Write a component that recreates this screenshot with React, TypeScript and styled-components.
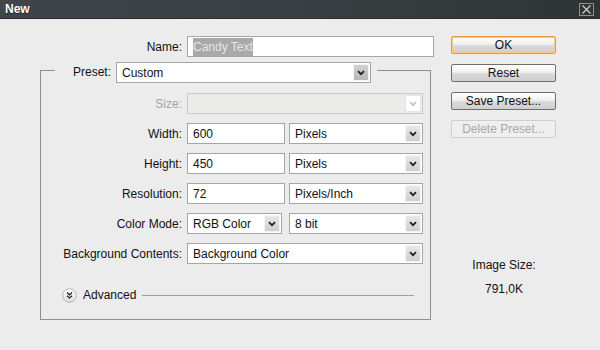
import React from 'react';
import styled, { createGlobalStyle } from 'styled-components';

const GlobalStyle = createGlobalStyle`
  html, body {
    margin: 0;
    padding: 0;
    background: #ececec;
  }
  body {
    font-family: 'Liberation Sans', Arial, sans-serif;
    font-size: 12px;
    color: #111;
  }
`;

const Window = styled.div`
  width: 600px;
  height: 350px;
  background: #ececec;
  overflow: hidden;
`;

const TitleBar = styled.div`
  height: 19px;
  display: flex;
  align-items: center;
  justify-content: space-between;
  padding: 0 6px 0 5px;
  box-sizing: border-box;
  background: linear-gradient(90deg, #3f454b 0%, #393f42 50%, #2f3433 100%);
  border-bottom: 1px solid #2a2d2d;
`;

const Title = styled.span`
  color: #fff;
  font-weight: bold;
  font-size: 12px;
  text-shadow: 0 1px 1px rgba(0, 0, 0, 0.6);
`;

const CloseBox = styled.div`
  width: 15px;
  height: 13px;
  box-sizing: border-box;
  border: 1px solid #8c9090;
  display: flex;
  align-items: center;
  justify-content: center;
`;

const Content = styled.div`
  display: flex;
  padding-top: 17px;
`;

const LeftColumn = styled.div`
  width: 440px;
  display: flex;
  flex-direction: column;
`;

const FormRow = styled.div<{ $labelWidth: number }>`
  display: grid;
  grid-template-columns: ${p => p.$labelWidth}px 1fr;
  column-gap: 5px;
  align-items: center;
  height: 21px;
`;

const Label = styled.label<{ $disabled?: boolean }>`
  text-align: right;
  color: ${p => (p.$disabled ? '#a4a4a4' : '#111')};
  white-space: nowrap;
`;

const Controls = styled.div<{ $gap?: number }>`
  display: flex;
  gap: ${p => p.$gap ?? 4}px;
  height: 21px;
`;

const TextInput = styled.div<{ $width?: number }>`
  box-sizing: border-box;
  height: 21px;
  width: ${p => (p.$width ? `${p.$width}px` : 'auto')};
  flex: ${p => (p.$width ? 'none' : '1')};
  background: #fff;
  border: 1px solid #a3a6a8;
  display: flex;
  align-items: center;
  padding-left: 5px;
  color: #111;
`;

const Selected = styled.span`
  background: #a9a9a9;
  color: #e6e6e6;
  padding: 1px 0;
  line-height: 16px;
`;

const SelectBox = styled.div<{ $disabled?: boolean; $width?: number }>`
  box-sizing: border-box;
  height: 21px;
  width: ${p => (p.$width ? `${p.$width}px` : 'auto')};
  flex: ${p => (p.$width ? 'none' : '1')};
  background: ${p => (p.$disabled ? '#ebebea' : '#fff')};
  border: 1px solid ${p => (p.$disabled ? '#cacac2' : '#a3a6a8')};
  display: flex;
  align-items: center;
  padding: 1px;
`;

const SelectValue = styled.span`
  flex: 1;
  padding-left: 4px;
  white-space: nowrap;
  overflow: hidden;
`;

const ArrowButton = styled.div<{ $disabled?: boolean; $dark?: boolean }>`
  width: 16px;
  height: 17px;
  box-sizing: border-box;
  border: 1px solid ${p => (p.$disabled ? '#e4e4e4' : '#f4f4f4')};
  background: ${p =>
    p.$disabled
      ? '#fff'
      : p.$dark
      ? 'linear-gradient(#d2d2d2, #b8b8b8)'
      : 'linear-gradient(#e8e8e8, #cfcfcf)'};
  display: flex;
  align-items: center;
  justify-content: center;
`;

const Chevron = ({ color }: { color: string }) => (
  <svg width="8" height="6" viewBox="0 0 8 6">
    <path d="M1 1.2 L4 4.2 L7 1.2" fill="none" stroke={color} strokeWidth="1.8" />
  </svg>
);

const Select = ({
  value,
  width,
  disabled,
  dark,
}: {
  value?: string;
  width?: number;
  disabled?: boolean;
  dark?: boolean;
}) => (
  <SelectBox $disabled={disabled} $width={width}>
    <SelectValue>{value}</SelectValue>
    <ArrowButton $disabled={disabled} $dark={dark}>
      <Chevron color={disabled ? '#c4c4c4' : '#222'} />
    </ArrowButton>
  </SelectBox>
);

const Group = styled.div`
  margin: 5px 0 0 40px;
  width: 391px;
  display: flex;
  flex-direction: column;
`;

const GroupHeader = styled.div`
  display: flex;
  height: 21px;
`;

const Corner = styled.div<{ $side: 'left' | 'right' }>`
  margin-top: 8px;
  border-top: 1px solid #8e8e8e;
  border-${p => p.$side}: 1px solid #8e8e8e;
  width: ${p => (p.$side === 'left' ? '14px' : 'auto')};
  flex: ${p => (p.$side === 'left' ? 'none' : '1')};
  margin-left: ${p => (p.$side === 'right' ? '6px' : '0')};
`;

const PresetLabel = styled.label`
  width: 61px;
  box-sizing: border-box;
  padding-right: 5px;
  text-align: right;
  line-height: 21px;
`;

const GroupBody = styled.div`
  border: 1px solid #8e8e8e;
  border-top: none;
  padding: 10px 7px 17px 0;
  display: flex;
  flex-direction: column;
  gap: 9px;
`;

const AdvancedRow = styled.div`
  display: flex;
  align-items: center;
  gap: 6px;
  margin-top: 15px;
  padding-left: 21px;
  padding-right: 9px;
  height: 14px;
`;

const Rule = styled.div`
  flex: 1;
  border-top: 1px solid #a0a0a0;
  margin-top: 1px;
`;

const RightColumn = styled.div`
  margin-left: 11px;
  width: 105px;
  display: flex;
  flex-direction: column;
  gap: 10px;
`;

const Button = styled.div<{ $variant?: 'default' | 'disabled' }>`
  height: 18px;
  box-sizing: border-box;
  display: flex;
  align-items: center;
  justify-content: center;
  border-radius: 2px;
  border: 1px solid
    ${p =>
      p.$variant === 'default'
        ? '#e89a3c'
        : p.$variant === 'disabled'
        ? '#cdcdcd'
        : '#6f6f6f'};
  background: ${p =>
    p.$variant === 'disabled'
      ? '#efefef'
      : 'linear-gradient(#ffffff 0%, #f1f1f1 45%, #d9d9d9 55%, #cfcfcf 100%)'};
  box-shadow: ${p => (p.$variant === 'default' ? 'inset 0 0 0 1px #f6c98d' : 'none')};
  color: ${p => (p.$variant === 'disabled' ? '#a8a8a8' : '#111')};
`;

const ImageSize = styled.div`
  margin-top: 110px;
  display: flex;
  flex-direction: column;
  align-items: center;
  gap: 10px;
  padding-left: 1px;
`;

const AdvancedIcon = () => (
  <svg width="15" height="15" viewBox="0 0 15 15">
    <defs>
      <linearGradient id="adv" x1="0" y1="0" x2="0" y2="1">
        <stop offset="0" stopColor="#ffffff" />
        <stop offset="1" stopColor="#dcdcdc" />
      </linearGradient>
    </defs>
    <circle cx="7.5" cy="7.5" r="6.8" fill="url(#adv)" stroke="#b4b4b4" />
    <path d="M5 4.6 L7.5 6.8 L10 4.6 M5 7.8 L7.5 10 L10 7.8" fill="none" stroke="#222" strokeWidth="1.3" />
  </svg>
);

export default function App() {
  return (
    <Window>
      <GlobalStyle />
      <TitleBar>
        <Title>New</Title>
        <CloseBox>
          <svg width="11" height="9" viewBox="0 0 11 9">
            <path d="M1.5 0.5 L9.5 8.5 M9.5 0.5 L1.5 8.5" stroke="#cfd2d2" strokeWidth="1.2" />
          </svg>
        </CloseBox>
      </TitleBar>
      <Content>
        <LeftColumn>
          <FormRow $labelWidth={182}>
            <Label>Name:</Label>
            <TextInput $width={247}>
              <Selected>Candy Text</Selected>
            </TextInput>
          </FormRow>
          <Group>
            <GroupHeader>
              <Corner $side="left" />
              <PresetLabel>Preset:</PresetLabel>
              <Select value="Custom" width={255} dark />
              <Corner $side="right" />
            </GroupHeader>
            <GroupBody>
              <FormRow $labelWidth={141}>
                <Label $disabled>Size:</Label>
                <Controls>
                  <Select disabled />
                </Controls>
              </FormRow>
              <FormRow $labelWidth={141}>
                <Label>Width:</Label>
                <Controls>
                  <TextInput $width={98}>600</TextInput>
                  <Select value="Pixels" />
                </Controls>
              </FormRow>
              <FormRow $labelWidth={141}>
                <Label>Height:</Label>
                <Controls>
                  <TextInput $width={98}>450</TextInput>
                  <Select value="Pixels" />
                </Controls>
              </FormRow>
              <FormRow $labelWidth={141}>
                <Label>Resolution:</Label>
                <Controls>
                  <TextInput $width={98}>72</TextInput>
                  <Select value="Pixels/Inch" />
                </Controls>
              </FormRow>
              <FormRow $labelWidth={141}>
                <Label>Color Mode:</Label>
                <Controls $gap={7}>
                  <Select value="RGB Color" width={95} />
                  <Select value="8 bit" />
                </Controls>
              </FormRow>
              <FormRow $labelWidth={141}>
                <Label>Background Contents:</Label>
                <Controls>
                  <Select value="Background Color" />
                </Controls>
              </FormRow>
              <AdvancedRow>
                <AdvancedIcon />
                <span>Advanced</span>
                <Rule />
              </AdvancedRow>
            </GroupBody>
          </Group>
        </LeftColumn>
        <RightColumn>
          <Button $variant="default">OK</Button>
          <Button>Reset</Button>
          <Button>Save Preset...</Button>
          <Button $variant="disabled">Delete Preset...</Button>
          <ImageSize>
            <span>Image Size:</span>
            <span>791,0K</span>
          </ImageSize>
        </RightColumn>
      </Content>
    </Window>
  );
}
